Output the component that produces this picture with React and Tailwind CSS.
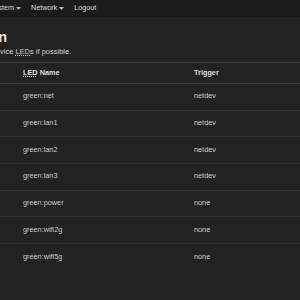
import React from 'react'

const leds = [
  { name: 'green:net', trigger: 'netdev' },
  { name: 'green:lan1', trigger: 'netdev' },
  { name: 'green:lan2', trigger: 'netdev' },
  { name: 'green:lan3', trigger: 'netdev' },
  { name: 'green:power', trigger: 'none' },
  { name: 'green:wifi2g', trigger: 'none' },
  { name: 'green:wifi5g', trigger: 'none' },
]

const Caret = () => (
  <svg width="5" height="3" viewBox="0 0 5 3" className="ml-[2px]">
    <path d="M0 0h5L2.5 3z" fill="#bbb" />
  </svg>
)

export default function App() {
  return (
    <div className="w-[300px] h-[300px] overflow-hidden bg-[#222222] text-[#d4d4d4] font-['Liberation_Sans',Arial,sans-serif]">

      {/* Top menu bar, page is scrolled so the left part is cut */}
      <div className="h-[17px] bg-[#1b1b1b] overflow-hidden">
        <div className="flex items-center h-full gap-[10px] -ml-[10px] text-[7.2px] text-[#dddddd]">
          <span className="flex items-center">System<Caret /></span>
          <span className="flex items-center">Network<Caret /></span>
          <span>Logout</span>
        </div>
      </div>

      {/* Title + description */}
      <div className="-ml-[121px] whitespace-nowrap">
        <h2 className="mt-[12px] h-[16px] leading-[16px] text-[14.5px] font-bold text-[#e2e2e2]">
          LED Configuration
        </h2>
        <p className="mt-[2px] ml-[3px] h-[10px] leading-[10px] text-[7.5px] text-[#cfcfcf]">
          Customizes the behaviour of the device{' '}
          <abbr className="underline decoration-dotted underline-offset-1" title="Light Emitting Diode">LED</abbr>s if possible.
        </p>
      </div>

      {/* LED table */}
      <div className="mt-[5px] text-[7.3px]">
        <div className="flex items-center h-[22px] border-y border-[#3a3a3a] pl-[23px] font-bold text-[#dedede]">
          <div className="w-[171px]">
            <abbr className="underline decoration-dotted underline-offset-1" title="Light Emitting Diode">LED</abbr> Name
          </div>
          <div>Trigger</div>
        </div>
        {leds.map((led, i) => (
          <div key={led.name}
            className={`flex items-center h-[26.67px] pl-[23px] text-[#cccccc] ${i < leds.length - 1 ? 'border-b border-[#333333]' : ''}`}>
            <div className="w-[171px]">{led.name}</div>
            <div>{led.trigger}</div>
          </div>
        ))}
      </div>
    </div>
  )
}
